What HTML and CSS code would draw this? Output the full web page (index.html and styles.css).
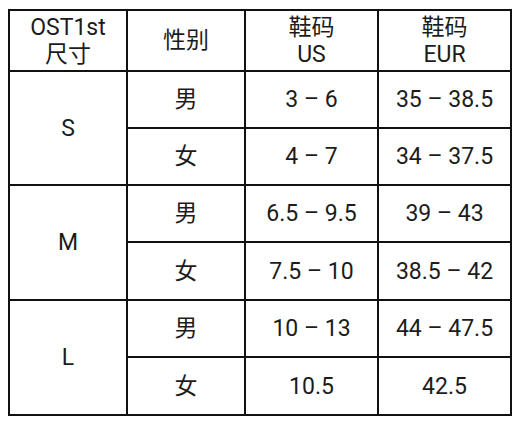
FILE: index.html
```html
<!DOCTYPE html>
<html lang="zh">
<head>
<meta charset="utf-8">
<link rel="stylesheet" href="styles.css">
</head>
<body>
<table class="size-table">
  <colgroup>
    <col class="c1"><col class="c2"><col class="c3"><col class="c4">
  </colgroup>
  <thead>
    <tr class="head">
      <th>OST1st<br>尺寸</th>
      <th>性别</th>
      <th>鞋码<br>US</th>
      <th>鞋码<br>EUR</th>
    </tr>
  </thead>
  <tbody>
    <tr class="r57"><td rowspan="2">S</td><td>男</td><td>3 – 6</td><td>35 – 38.5</td></tr>
    <tr class="r57"><td>女</td><td>4 – 7</td><td>34 – 37.5</td></tr>
    <tr class="r57"><td rowspan="2">M</td><td>男</td><td>6.5 – 9.5</td><td>39 – 43</td></tr>
    <tr class="r58"><td>女</td><td>7.5 – 10</td><td>38.5 – 42</td></tr>
    <tr class="r57"><td rowspan="2">L</td><td>男</td><td>10 – 13</td><td>44 – 47.5</td></tr>
    <tr class="r58"><td>女</td><td>10.5</td><td>42.5</td></tr>
  </tbody>
</table>
</body>
</html>
```

FILE: styles.css
```css
html, body {
  background: #ffffff;
}
body {
  margin: 9px 0 0 8px;
  font-family: Roboto, "Noto Sans CJK SC", sans-serif;
  color: #1c1c1c;
}
.size-table {
  border-collapse: collapse;
  table-layout: fixed;
  width: 502px;
}
.c1, .c2 { width: 118px; }
.c3, .c4 { width: 133px; }
.size-table th,
.size-table td {
  border: 2px solid #111111;
  padding: 0;
  text-align: center;
  vertical-align: middle;
  font-size: 23px;
  font-weight: 400;
  line-height: 27px;
}
.head th { height: 59px; }
.r57 td { height: 55px; }
.r58 td { height: 56px; }
```
